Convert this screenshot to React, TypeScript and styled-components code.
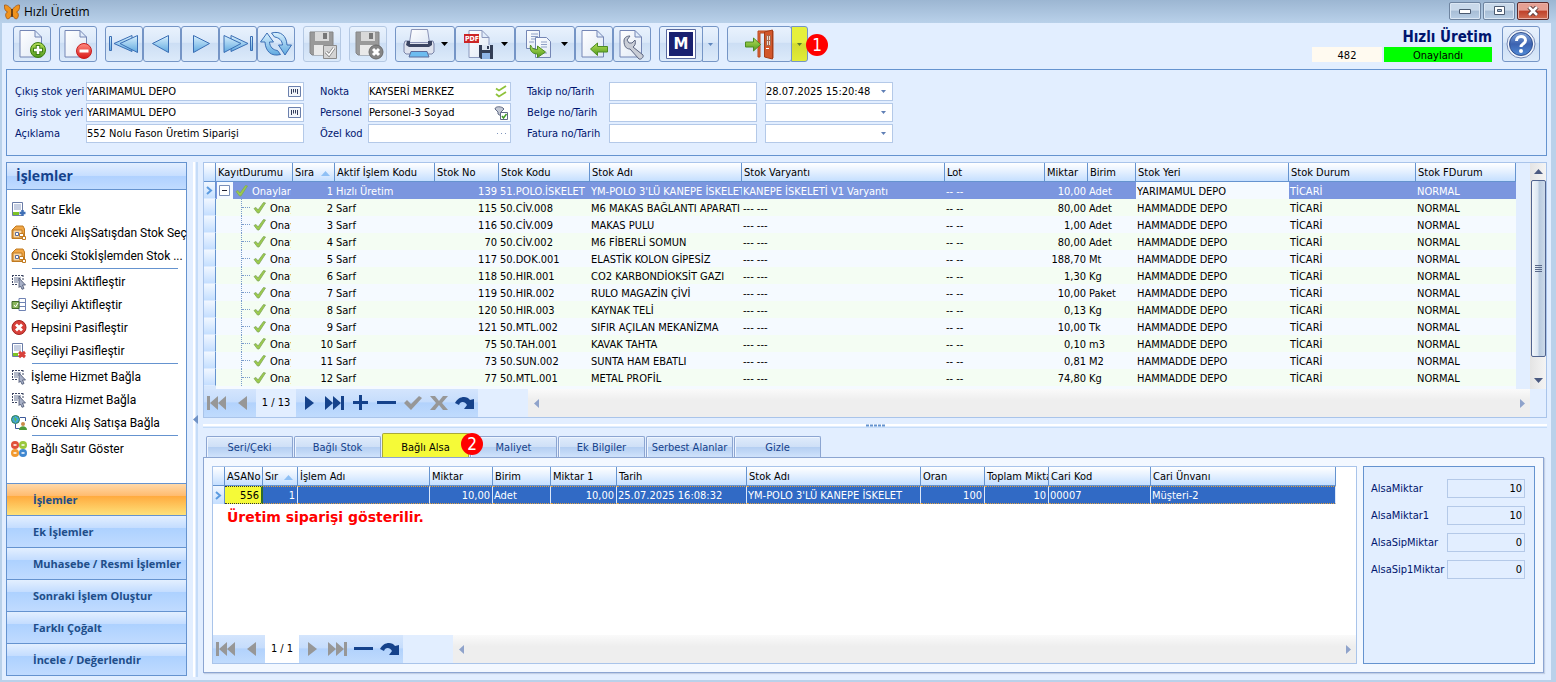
import React from "react";
import styled, { createGlobalStyle, css } from "styled-components";

const ui = `"DejaVu Sans Condensed", "DejaVu Sans", sans-serif`;
const segoe = `"Open Sans", "Noto Sans", sans-serif`;
const listFont = `Roboto, "Open Sans", sans-serif`;

const Global = createGlobalStyle`
  *, *::before, *::after { box-sizing: border-box; }
  body { margin: 0; background: #b9d1ea; font-family: ${ui}; font-size: 11px; color: #000; }
  button, input { font: inherit; color: inherit; margin: 0; padding: 0; border: 0; background: none; border-radius: 0; }
  svg { display: block; flex: none; }
`;

const Window = styled.div`
  min-height: 100vh;
  display: flex;
  flex-direction: column;
  border: solid #b9d1ea;
  border-width: 0 5px 2px 2px;
`;
const TitleBar = styled.header`
  height: 23px;
  margin: 0 -5px 0 -2px;
  padding: 0 7px 0 4px;
  display: flex;
  align-items: center;
  gap: 4px;
  background: linear-gradient(#9cb6d2, #b9d1ea);
  font: 12px/16px ${segoe};
`;
const WindowButtons = styled.div`
  margin-left: auto;
  display: flex;
  gap: 2px;
  align-self: flex-start;
  padding-top: 2px;
`;
const WindowButton = styled.button<{ $close?: boolean }>`
  width: 32px;
  height: 18px;
  display: grid;
  place-items: center;
  border: 1px solid ${(p) => (p.$close ? "#5b2b2b" : "#6e84a0")};
  border-radius: 2px;
  box-shadow: inset 0 0 0 1px ${(p) => (p.$close ? "#e9b0a6" : "#dbe7f4")};
  background: ${(p) =>
    p.$close
      ? "linear-gradient(#e6a093 45%, #bf4029 50%, #cf6b50)"
      : "linear-gradient(#c9d9ea 45%, #a7bdd5 50%, #b9cfe6)"};
`;

const Client = styled.main`
  flex: 1;
  display: flex;
  flex-direction: column;
  background: #e2eeff;
  padding: 3px 4px 3px 4px;
`;

const ToolBar = styled.div`
  display: flex;
  align-items: flex-start;
  padding: 0 7px;
  height: 43px;
`;
const ToolGroup = styled.div`
  display: flex;
  margin-right: 8px;
  position: relative;
`;
const toolFace = css`
  border: 1px solid #7595c6;
  border-radius: 3px;
  background: linear-gradient(#e9f2fd 0%, #dae8f9 45%, #ccdef4 48%, #dceafa 100%);
`;
const ToolButton = styled.button<{ $w?: number; $faded?: boolean }>`
  ${toolFace}
  width: ${(p) => p.$w ?? 38}px;
  height: 36px;
  display: flex;
  align-items: center;
  justify-content: center;
  gap: 6px;
  ${(p) => p.$faded && "border-color: #b4c8e3;"}
`;
const DropButton = styled(ToolButton)<{ $lit?: boolean }>`
  margin-left: -1px;
  border-radius: 0 3px 3px 0;
  ${(p) => p.$lit && "background: linear-gradient(#e6f03c 45%, #d3dc30 50%, #e2ec38);"}
`;
const Badge = styled.span`
  position: absolute;
  left: 79px;
  top: 8px;
  width: 22px;
  height: 22px;
  border-radius: 50%;
  background: #f00;
  color: #fff;
  display: grid;
  place-items: center;
  font: 17px/22px ${ui};
  z-index: 2;
`;
const StatusArea = styled.div`
  margin-left: auto;
  display: flex;
  gap: 10px;
`;
const StatusGrid = styled.div`
  display: grid;
  grid-template-columns: 70px 108px;
  column-gap: 2px;
  align-content: start;
  text-align: center;
  line-height: 13px;
  h1 {
    grid-column: 1 / 3;
    margin: 0;
    padding-top: 2px;
    text-align: right;
    color: #00156e;
    font: bold 15px/19px ${ui};
  }
`;
const DocNo = styled.span`
  background: #fffaf0;
  padding-top: 2px;
`;
const Approved = styled(DocNo)`
  background: #0f0;
`;

const FormPanel = styled.section`
  border: 1px solid #6593cf;
  height: 87px;
  padding: 12px 8px;
  display: flex;
  align-items: flex-start;
`;
const FormColumn = styled.div<{ $label: number; $field: number; $gap: number }>`
  display: grid;
  grid-template-columns: ${(p) => p.$label}px ${(p) => p.$field}px;
  row-gap: 2px;
  margin-right: ${(p) => p.$gap}px;
  color: #00156e;
  line-height: 19px;
  white-space: nowrap;
`;
const DateColumn = styled.div`
  display: grid;
  grid-template-columns: 128px;
  row-gap: 2px;
`;
const Field = styled.span`
  height: 19px;
  display: flex;
  align-items: center;
  background: #fff;
  border: 1px solid #b4c9e8;
  color: #000;
  padding: 0 2px 0 0;
  input { flex: 1; min-width: 0; height: 17px; }
  button { display: grid; place-items: center; min-width: 14px; height: 14px; }
`;

const Body = styled.div`
  flex: 1;
  display: flex;
  margin-top: 6px;
  min-width: 0;
`;
const Sidebar = styled.nav`
  width: 181px;
  flex: none;
  display: flex;
  flex-direction: column;
  border: 1px solid #6593cf;
  background: #fff;
  font: 12px/16px ${listFont};
  margin-bottom: 1px;
  h2 {
    margin: 0;
    height: 27px;
    padding-left: 9px;
    font: bold 14px/26px ${segoe};
    color: #15428b;
    border-bottom: 1px solid #6593cf;
    background: linear-gradient(#e3efff 0%, #c7deff 48%, #b0d1ff 52%, #c0dbff 100%);
  }
`;
const ActionList = styled.div`
  flex: 1;
  padding-top: 8px;
`;
const Action = styled.button`
  width: 100%;
  height: 23px;
  display: flex;
  align-items: center;
  gap: 4px;
  padding-left: 4px;
  text-align: left;
  white-space: nowrap;
`;
const Rule = styled.hr`
  margin: 1px 8px 1px 25px;
  border: 0;
  border-top: 1px solid #6593cf;
`;
const NavButton = styled.button<{ $on?: boolean }>`
  width: 100%;
  height: 32px;
  padding-left: 26px;
  text-align: left;
  white-space: nowrap;
  font: bold 11px/20px ${segoe};
  color: #204d89;
  border-top: 1px solid #6593cf;
  background: ${(p) =>
    p.$on
      ? "linear-gradient(#ffd9a9 0%, #ffbb6e 38%, #ffab3f 40%, #fee17a 100%)"
      : "linear-gradient(#e3efff 0%, #c4ddff 38%, #add1ff 40%, #c0dbff 100%)"};
`;
const VSplit = styled.div`
  width: 16px;
  flex: none;
  display: flex;
  align-items: center;
  &::after { content: ""; align-self: stretch; width: 5px; border-left: 2px solid #fff; border-right: 2px solid #c5dcf8; margin-left: -5px; }
  svg { margin-left: 6px; position: relative; z-index: 1; }
`;

const Content = styled.div`
  flex: 1;
  min-width: 0;
  display: flex;
  flex-direction: column;
`;
const GridPanel = styled.section`
  border: 1px solid #a9c4ea;
  background: #e2eeff;
`;
const GridTop = styled.div`
  display: flex;
  justify-content: space-between;
`;
const Clip = styled.div`
  flex: 1;
  min-width: 0;
  overflow: hidden;
`;
const Table = styled.table<{ $w: number }>`
  width: ${(p) => p.$w}px;
  table-layout: fixed;
  border-collapse: separate;
  border-spacing: 0;
  th, td { white-space: nowrap; overflow: hidden; font-weight: normal; text-align: left; }
  th {
    height: 19px;
    padding: 2px 1px 0 2px;
    line-height: 16px;
    border-right: 1px solid #6593cf;
    border-bottom: 1px solid #6593cf;
    background: linear-gradient(#fff 0%, #e6f1ff 45%, #c5dfff 100%);
  }
  td { height: 17px; line-height: 15px; padding: 2px 1px 0; }
  td:first-child { border-right: 1px solid #6593cf; border-bottom: 1px solid #dcebff; background: linear-gradient(#f1f7ff, #c5dfff); padding: 0 0 0 2px; }
  td.n { text-align: right; padding-right: 2px; }
  td.tree { padding: 0 1px; }
`;
const Row = styled.tr<{ $i: number; $sel?: boolean }>`
  background: ${(p) => (p.$sel ? "#7b96df" : p.$i % 2 ? "#f4fdf3" : "#f5faff")};
  color: ${(p) => (p.$sel ? "#fff" : "#000")};
  td.light { background: #f5faff; color: #000; }
`;
const TreeCell = styled.div`
  display: flex;
  align-items: center;
  height: 17px;
  line-height: 17px;
  margin-right: 1px;
  overflow: hidden;
  gap: 4px;
`;
const TreeText = styled.span`
  padding-top: 1px;
`;
const Indent = styled.span`
  flex: none;
  width: 8px;
  height: 17px;
  margin-left: 24px;
  border-left: 1px dotted #7a9ccb;
  &::after { content: ""; display: block; width: 8px; height: 9px; border-bottom: 1px dotted #7a9ccb; }
`;
const RootMark = styled.span`
  flex: none;
  width: 17px;
  height: 17px;
  background: #f5faff;
  display: grid;
  place-items: center;
  margin: 0 -2px 0 -1px;
`;
const Peek = styled.div<{ $w: number }>`
  height: 3px;
  width: ${(p) => p.$w}px;
  border-left: 12px solid #d6e7fd;
  background: #f5faff;
`;
const VScroll = styled.div`
  width: 16px;
  margin: 0;
  display: flex;
  flex-direction: column;
  align-items: center;
  background: linear-gradient(90deg, #e4e4e4, #f4f4f4);
`;
const ScrollArrow = styled.button`
  width: 16px;
  height: 17px;
  display: grid;
  place-items: center;
`;
const VThumb = styled.div`
  width: 15px;
  height: 177px;
  margin-bottom: auto;
  border: 1px solid #51648f;
  border-radius: 2px;
  background: linear-gradient(90deg, #f3f7fb 0%, #dbe6f1 45%, #b9cbdf 55%, #ccdaea 100%);
  display: grid;
  place-items: center;
`;
const NavBar = styled.div`
  height: 28px;
  display: flex;
`;
const NavStrip = styled.div`
  display: flex;
  background: linear-gradient(#d4e5fd 0%, #c6ddfc 45%, #b2d2fc 50%, #c0dbfd 100%);
`;
const NavItem = styled.button`
  width: 26px;
  height: 28px;
  padding-right: 2px;
  display: grid;
  place-items: center;
`;
const NavPos = styled.span<{ $w: number; $bg: string }>`
  width: ${(p) => p.$w}px;
  text-align: center;
  line-height: 28px;
  background: ${(p) => p.$bg};
`;
const HScroll = styled.div<{ $corner?: boolean }>`
  flex: 1;
  margin-left: 50px;
  margin-right: ${(p) => (p.$corner ? 16 : 0)}px;
  display: flex;
  justify-content: space-between;
  align-items: center;
  background: linear-gradient(#fafafa, #eee 40%);
`;
const HSplit = styled.div`
  height: 15px;
  display: grid;
  place-items: center;
  background: linear-gradient(#e2eeff 6px, #fff 6px, #fff 8px, #e2eeff 8px, #e2eeff 9px, #c5dcf8 9px, #c5dcf8 10px, #e2eeff 10px);
`;
const TabList = styled.div`
  display: flex;
  align-items: flex-end;
  gap: 1px;
  height: 24px;
  padding-left: 3px;
`;
const Tab = styled.button<{ $on?: boolean }>`
  position: relative;
  z-index: ${(p) => (p.$on ? 1 : 0)};
  width: 87px;
  height: ${(p) => (p.$on ? 24 : 21)}px;
  padding-top: ${(p) => (p.$on ? 4 : 2)}px;
  line-height: 18px;
  border: 1px solid #8ca5d1;
  border-bottom: 0;
  border-radius: 2px 2px 0 0;
  box-shadow: inset 1px 1px 0 #eef5ff;
  color: #15428b;
  background: linear-gradient(#dfebfb 0%, #cfe0f7 48%, #b5cff2 52%, #cfe2fb 100%);
  ${(p) =>
    p.$on &&
    css`
      color: #000;
      border-color: #a9a93a;
      box-shadow: none;
      background: #f5fa38;
    `}
`;
const TabBadge = styled(Badge)`
  left: 78px;
  top: -1px;
`;
const TabPage = styled.section`
  flex: 1;
  margin-right: 3px;
  margin-bottom: 4px;
  border: 1px solid #8ca5d1;
  box-shadow: 1px 1px 1px #c3d0e6;
  background: #f3f8ff;
  padding: 8px;
  display: flex;
  gap: 6px;
  min-width: 0;
`;
const LinkedPanel = styled(GridPanel)`
  flex: 1;
  min-width: 0;
  background: #fff;
  display: flex;
  flex-direction: column;
  ${Table} tr td { color: #fff; background: #316ac5; border-top: 1px dotted #e0a040; border-bottom: 1px dotted #e0a040; border-right: 1px solid #dbe7fa; line-height: 14px; padding: 2px 2px 0 1px; }
  ${Table} tr td:first-child { background: linear-gradient(#f1f7ff, #c5dfff); border: 0; border-right: 1px solid #6593cf; padding: 0 0 0 2px; }
  ${Table} tr td.mark { background: #f5fa38; color: #000; border-color: #333; border-right: 2px solid #2e6b2e; }
`;
const LinkedClip = styled.div`
  overflow: hidden;
`;
const Note = styled.p`
  flex: 1;
  margin: 0;
  padding: 3px 14px;
  color: #f00;
  font: bold 14px/20px "DejaVu Sans", sans-serif;
`;
const LowerNav = styled(NavBar)`
  background: #e2eeff;
`;
const Totals = styled.section`
  width: 172px;
  border: 1px solid #6593cf;
  background: #e2eeff;
  padding: 12px 7px;
  color: #00156e;
  display: grid;
  grid-template-columns: 76px 78px;
  grid-auto-rows: 19px;
  row-gap: 8px;
  align-content: start;
  line-height: 19px;
  white-space: nowrap;
  input { border: 1px solid #b4c9e8; text-align: right; padding: 0 2px; color: #000; width: 78px; height: 19px; }
`;
const HiddenSvg = styled.svg`
  position: absolute;
`;

/* ---------- drawings ---------- */

const Defs = () => (
  <HiddenSvg width="0" height="0" aria-hidden>
    <defs>
      <linearGradient id="blue" x1="0" y1="0" x2="0" y2="1">
        <stop offset="0" stopColor="#d9f0fd" /><stop offset="1" stopColor="#5fa9e0" />
      </linearGradient>
      <linearGradient id="paper" x1="0" y1="0" x2="1" y2="1">
        <stop offset="0" stopColor="#fff" /><stop offset="1" stopColor="#dfe8f5" />
      </linearGradient>
      <linearGradient id="green" x1="0" y1="0" x2="0" y2="1">
        <stop offset="0" stopColor="#b8e05a" /><stop offset="1" stopColor="#4f9a1c" />
      </linearGradient>
      <linearGradient id="red" x1="0" y1="0" x2="0" y2="1">
        <stop offset="0" stopColor="#ff8a80" /><stop offset="1" stopColor="#d81818" />
      </linearGradient>
      <linearGradient id="help" x1="0" y1="0" x2="0" y2="1">
        <stop offset="0" stopColor="#86a8dc" /><stop offset="0.5" stopColor="#3c62b0" /><stop offset="1" stopColor="#4f8ad6" />
      </linearGradient>
    </defs>
  </HiddenSvg>
);
const I = ({ w = 32, h = 32, children }: { w?: number; h?: number; children: React.ReactNode }) => (
  <svg width={w} height={h} viewBox={`0 0 ${w} ${h}`} aria-hidden>{children}</svg>
);
const Page = ({ x = 5 }: { x?: number }) => (
  <path d={`M${x} 2.500h15l6.500 6.500v20h-21.500z M${x + 15} 2.500v6.500h6.500`} fill="url(#paper)" stroke="#7486b5" strokeLinejoin="round" />
);
const NewIcon = () => (<I><Page x={4} /><circle cx="22" cy="22" r="7.500" fill="url(#green)" stroke="#3c7d12" /><path d="M22 17v10M17 22h10" stroke="#3c7d12" strokeWidth="4.500" /><path d="M22 18v8M18 22h8" stroke="#fff" strokeWidth="2.500" /></I>);
const DeleteIcon = () => (<I><Page x={3} /><circle cx="22" cy="23" r="7.500" fill="url(#red)" stroke="#c81e1e" /><path d="M17.500 23h9" stroke="#fff" strokeWidth="3" /></I>);
const tri = { fill: "url(#blue)", stroke: "#3a6eb4", strokeLinejoin: "round" as const };
const FirstIcon = () => (<I><g {...tri}><path d="M1.500 8.500h2v14h-2z" /><path d="M24 7.500v16L6 15.500z" /><path d="M29.500 7.500v17L12 15.500z" /></g></I>);
const PrevIcon = () => (<I><path d="M22.500 7.500v17L6.500 15.500z" {...tri} /></I>);
const NextIcon = () => (<I><path d="M9.500 7.500v17L25.500 15.500z" {...tri} /></I>);
const LastIcon = () => (<I><g {...tri}><path d="M28.500 8.500h2v14h-2z" /><path d="M9 7.500v16L26 15.500z" /><path d="M2 7.500v17L19 15.500z" /></g></I>);
const RefreshIcon = () => (
  <I><g {...tri}>
    <path d="M5 14H.5L7 5l6.500 9H9.500c.3 5 3.500 8 8 8.500l3 4C11 29 5.500 23 5 14z" />
    <path d="M27 17h4.500L25 27l-6.500-10H22.500c-.3-4.500-3.500-7.500-8-8l-3-4C21 2.500 26.500 8 27 17z" />
  </g></I>
);
const GreyDisk = ({ ok }: { ok?: boolean }) => (
  <I><path d="M4 4h23v23H6l-2-2z" fill="#9a9a9a" stroke="#858585" /><path d="M9 4h14v9H9z" fill="#d9d9d9" /><path d="M17 5h4v6h-4z" fill="#777" /><path d="M8 17h15v10H8z" fill="#e9e9e9" />
    {ok ? (<><path d="M17.500 17.500h13v13h-13z" fill="#d4d4d4" stroke="#8a8a8a" /><path d="M20 24l3 3 5-7" fill="none" stroke="#777" strokeWidth="3" /><path d="M20 24l3 3 5-7" fill="none" stroke="#fff" strokeWidth="1.500" /></>)
      : (<><circle cx="24" cy="24" r="7" fill="#858585" stroke="#6a6a6a" /><path d="M21 21l6 6M27 21l-6 6" stroke="#fff" strokeWidth="3" /></>)}
  </I>
);
const Down = ({ c = "#000", s = 7 }: { c?: string; s?: number }) => (<I w={s} h={s > 5 ? 4 : 3}><path d={s > 5 ? "M0 0h7L3.500 4z" : "M0 0h5L2.500 3z"} fill={c} /></I>);
const PrintIcon = () => (<I><path d="M2 13h28l1 3v8l-2 2H3l-2-2v-8z" fill="#dfe3ee" stroke="#7a84a8" /><path d="M8.500 1.500h16l2 13h-20z" fill="url(#paper)" stroke="#8b93b5" /><path d="M4 13h3v3h18v-3h4v4l-3 2H6l-3-2z" fill="#3a4461" /><path d="M8 23.500h16l2 5.500H6z" fill="#6cbcf0" stroke="#5b6c9c" /></I>);
const PdfIcon = () => (<I><path d="M6 2.500h13l7 7v20H6z M19 2.500v7h7" fill="url(#paper)" stroke="#8b98bd" /><path d="M1 6h15v9H1z" fill="#cc2525" /><text x="2" y="13" fontSize="7" fontWeight="bold" fill="#fff" fontFamily="DejaVu Sans Condensed">PDF</text><path d="M16 17h14v14H18l-2-2z" fill="#333e56" /><path d="M19 17h8v5h-8z" fill="#dde6f2" /><path d="M24 18h2v3h-2z" fill="#333e56" /><path d="M19 25h8v6h-8z" fill="#8fb5e6" /></I>);
const CopyIcon = () => (<I><path d="M3.500 2.500h13v18h-13z" fill="url(#paper)" stroke="#7486b5" /><path d="M8 6h7M8 8.500h7M8 11h5M6 14h5" stroke="#8fa0c6" /><path d="M12.500 9.500h11l4 4v16h-15z" fill="url(#paper)" stroke="#7486b5" /><path d="M18 14h6M18 16.500h6M18 19h6M16 25h8" stroke="#8fa0c6" /><path d="M7.500 17c1 3 3 4.500 7 4.500V18l8 6-8 5.500V26c-6 0-8-4-7-9z" fill="url(#green)" stroke="#4d8c22" strokeLinejoin="round" /></I>);
const ImportIcon = () => (<I><Page x={4} /><path d="M12.500 21l7-6v3.500h10v5.500h-10V27.500z" fill="url(#green)" stroke="#4d8c22" strokeLinejoin="round" /></I>);
const ToolsIcon = () => (<I><Page x={4} /><path d="M8 13c0-3 2-5 6-5l-3 4 2 3h3l3-3c1 3 0 6-2 7l10 8c1 2-2 5-4 4l-9-10c-4 0-6-3-6-8z" fill="#c9cdd6" stroke="#5c6580" strokeLinejoin="round" /></I>);
const DoorIcon = () => (<I><path d="M14 3h15v27h-2V5H16v24h-2z" fill="#e06a3c" stroke="#b9471f" /><path d="M20.500 4l8-2v29l-8-2z" fill="#d2562a" stroke="#a63d18" /><path d="M22.500 7.500h4v10h-4zM24.500 7v10M22 12.500h5" fill="#eadbd2" stroke="#a7674c" /><path d="M22 20.500h3" stroke="#fff" /><path d="M1.500 14h8v-4l7 6.500-7 6.500v-4h-8z" fill="url(#green)" stroke="#4d8c22" strokeLinejoin="round" /></I>);
const HelpIcon = () => (<I><circle cx="16" cy="16" r="14" fill="#f2f5fb" stroke="#7286b3" /><circle cx="16" cy="16" r="11.500" fill="url(#help)" stroke="#31508f" /><path d="M11.500 13c0-6 9-6 9-.5 0 3.500-4.500 3-4.500 6.500" fill="none" stroke="#fff" strokeWidth="3" /><circle cx="16" cy="23" r="2" fill="#fff" /></I>);
const Butterfly = () => (<I w={16} h={16}><path d="M8 6C6 3 3 .5.500 1c-.5 3 .5 6 3 7C1 9 1 13 3.500 15c2 0 4-3 4.500-5 .5 2 2.500 5 4.500 5 2.500-2 2.500-6 0-7 2.500-1 3.500-4 3-7C13 .5 10 3 8 6z" fill="#f0931c" stroke="#9c4a07" strokeWidth=".7" /><path d="M8 5v8" stroke="#4a2a10" strokeWidth="1.500" /></I>);
const Check = () => (<I w={13} h={13}><path d="M1 7.500l2-1 2 2.500L10.500 1.500l2 .5L6 12H4.500z" fill="#9ccb4c" stroke="#7fa65a" strokeWidth=".8" /></I>);
const Keys = () => (<I w={13} h={11}><path d="M.5.5h12v10H.5z" fill="#f3f6fb" stroke="#6b80ad" /><path d="M3.500 3v5M5.500 3v3.500M7.500 3v3.500M9.500 3v5" stroke="#333d5c" /></I>);
const DoubleCheck = () => (<I w={12} h={13}><path d="M1 3.500l3 2L11 1M1 9l3 2.500L11 7" fill="none" stroke="#8fc23a" strokeWidth="1.800" /></I>);
const PersonPick = () => (<I w={14} h={14}><path d="M1 3c0-3 7-3 9 0l-3 3v4l-3-2V6z" fill="#c3c8d4" stroke="#606a85" /><path d="M6.500 6.500h7v7h-7z" fill="#fff" stroke="#606a85" /><path d="M8 10l1.500 2 3-4" fill="none" stroke="#3f9a22" strokeWidth="1.500" /></I>);
const Dots = () => (<I w={9} h={2}><path d="M0 0h1v1H0zM4 0h1v1H4zM8 0h1v1H8z" fill="#7f95bd" /></I>);
const Arrow = ({ l, c = "#8fa3cb" }: { l?: boolean; c?: string }) => (<I w={5} h={9}><path d={l ? "M5 0v9L0 4.500z" : "M0 0v9l5-4.500z"} fill={c} /></I>);
const Chevron = () => (<I w={7} h={9}><path d="M1 1l4 3.500L1 8" fill="none" stroke="#5b9be0" strokeWidth="2" /></I>);

const glyphs: Record<string, string> = {
  first: "M0 1h3v14H0z M3 8l8-7v14z M11 8l8-7v14z",
  prev: "M5 8l9-7v14z",
  next: "M6 1l9 7-9 7z",
  last: "M0 1l8 7-8 7z M8 1l8 7-8 7z M16 1h3v14h-3z",
  plus: "M8 0h3v6h6v3h-6v6H8V9H2V6h6z",
  minus: "M0 6h19v3H0z",
  check: "M1 8l3-3 4 4 8-8 3 2L8 15z",
  cross: "M1 1h5l4 5 4-5h5l-6 7 6 7h-5l-4-5-4 5H1l6-7z",
  redo: "M0 8c3-7 12-8 15-3l4-1v10H9l3-4c-2-4-7-4-8 0z",
};
const NavGlyph = ({ k, on }: { k: string; on?: boolean }) => (
  <NavItem aria-label={k}><I w={19} h={16}><path d={glyphs[k]} fill={on ? "#15428b" : "#979797"} /></I></NavItem>
);

const sideIcons: Record<string, React.ReactNode> = {
  add: <><path d="M1.500.5h10v13h-10z" fill="#fff" stroke="#6b7da8" /><path d="M3 3h7M3 5h7M3 7h7" stroke="#8fa0c6" /><path d="M2 10h6v3H2z" fill="#7dc325" /><path d="M11.500 8v6M8.500 11h6" stroke="#3f6fb5" strokeWidth="2.500" /></>,
  box: <><path d="M1 5l4-4h7l1.500 3v9.500H1z" fill="#f0a646" stroke="#c17a20" /><path d="M2 5h9v8H2z" fill="#f9d7a4" stroke="#c17a20" /><path d="M4.500 7.500h3v3h-3z" fill="#fff" stroke="#5b6c9c" /><path d="M8.500 8.500h4v3h-4zM11.500 11.500h3v3h-3z" fill="#fff" stroke="#c17a20" /></>,
  pick: <><path d="M1 1.500h11M1.500 1v10M12 1v6M1 10.500h6" stroke="#3d4663" strokeDasharray="2 1" fill="none" /><path d="M3 4h7M3 6h5M3 8h4" stroke="#6b7694" /><path d="M8 4l6.500 7h-3l1.500 3.500-2 .8L9.500 12 8 13.500z" fill="#a7b0c6" stroke="#46506e" strokeWidth=".8" /></>,
  table: <><path d="M8 1.500h6.500v12H8zM8 5.500h6.500M8 9.500h6.500" fill="#fff" stroke="#7083b4" /><path d="M1 4.500h7v7H1z" fill="#8ab65c" stroke="#3f6b2a" /><path d="M3 8l1.500 2L7 6" stroke="#fff" fill="none" /></>,
  stop: <><circle cx="8" cy="7.500" r="7" fill="#d8403a" stroke="#a32420" /><path d="M5 4.500l6 6M11 4.500l-6 6" stroke="#fff" strokeWidth="2.800" /></>,
  del: <><path d="M1.500.5h10v13h-10z" fill="#fff" stroke="#6b7da8" /><path d="M3 3h7M3 5h7M3 7h7" stroke="#8fa0c6" /><path d="M2 10h5v3H2z" fill="#7dc325" /><path d="M8 9l6 5M14 9l-6 5" stroke="#d8403a" strokeWidth="3" /></>,
  globe: <><circle cx="4.500" cy="4.500" r="4" fill="#43a5d8" stroke="#2a7a4a" /><path d="M3 2l3 2-2 3z" fill="#5cc04a" /><path d="M9 2.500h5.500V6M4.500 9v4.500H9" fill="none" stroke="#3d5a9a" /><circle cx="12" cy="9" r="2" fill="#c98b4a" /><path d="M8 15c0-5 8-5 8 0z" fill="#4d9a3a" /></>,
  balls: <><circle cx="4" cy="4" r="4" fill="#e0503a" /><circle cx="12" cy="4" r="4" fill="#9ac83c" /><circle cx="4" cy="12" r="4" fill="#f29a30" /><circle cx="12" cy="12" r="4" fill="#3f87d0" /><path d="M2.500 4h3M10.500 4h3M2.500 12h3M10.500 12h3" stroke="#fff" strokeWidth="1.500" /></>,
};
const SideIcon = ({ k }: { k: string }) => <I w={16} h={16}>{sideIcons[k]}</I>;

/* ---------- data ---------- */

const actions: (string[] | null)[] = [
  ["add", "Satır Ekle"], ["box", "Önceki AlışSatışdan Stok Seç"], ["box", "Önceki Stokİşlemden Stok ..."], null,
  ["pick", "Hepsini Aktifleştir"], ["table", "Seçiliyi Aktifleştir"], ["stop", "Hepsini Pasifleştir"], ["del", "Seçiliyi Pasifleştir"], null,
  ["pick", "İşleme Hizmet Bağla"], ["pick", "Satıra Hizmet Bağla"], ["globe", "Önceki Alış Satışa Bağla"], null,
  ["balls", "Bağlı Satır Göster"],
];
const sections = ["İşlemler", "Ek İşlemler", "Muhasebe / Resmi İşlemler", "Sonraki İşlem Oluştur", "Farklı Çoğalt", "İncele / Değerlendir"];

const cols: [string, number][] = [
  ["", 12], ["KayıtDurumu", 77], ["Sıra", 42], ["Aktif İşlem Kodu", 100], ["Stok No", 64], ["Stok Kodu", 91], ["Stok Adı", 152],
  ["Stok Varyantı", 203], ["Lot", 100], ["Miktar", 43], ["Birim", 48], ["Stok Yeri", 153], ["Stok Durum", 127], ["Stok FDurum", 100],
];
const rows: string[][] = [
  ["139", "51.POLO.İSKELET", "YM-POLO 3'LÜ KANEPE İSKELET", "10,00", "Adet"],
  ["115", "50.CİV.008", "M6 MAKAS BAĞLANTI APARATI", "80,00", "Adet"],
  ["116", "50.CİV.009", "MAKAS PULU", "1,00", "Adet"],
  ["70", "50.CİV.002", "M6 FİBERLİ SOMUN", "80,00", "Adet"],
  ["117", "50.DOK.001", "ELASTİK KOLON GİPESİZ", "188,70", "Mt"],
  ["118", "50.HIR.001", "CO2 KARBONDİOKSİT GAZI", "1,30", "Kg"],
  ["119", "50.HIR.002", "RULO MAGAZİN ÇİVİ", "10,00", "Paket"],
  ["120", "50.HIR.003", "KAYNAK TELİ", "0,13", "Kg"],
  ["121", "50.MTL.002", "SIFIR AÇILAN MEKANİZMA", "10,00", "Tk"],
  ["75", "50.TAH.001", "KAVAK TAHTA", "0,10", "m3"],
  ["73", "50.SUN.002", "SUNTA HAM EBATLI", "0,81", "M2"],
  ["77", "50.MTL.001", "METAL PROFİL", "74,80", "Kg"],
];
const linkedCols: [string, number][] = [
  ["", 12], ["ASANo", 38], ["Sır", 35], ["İşlem Adı", 132], ["Miktar", 63], ["Birim", 58], ["Miktar 1", 66], ["Tarih", 130],
  ["Stok Adı", 174], ["Oran", 64], ["Toplam Mikta", 64], ["Cari Kod", 102], ["Cari Ünvanı", 185],
];
const linkedRow = ["556", "1", "", "10,00", "Adet", "10,00", "25.07.2025 16:08:32", "YM-POLO 3'LÜ KANEPE İSKELET", "100", "10", "00007", "Müşteri-2"];
const rightAligned = [0, 1, 3, 5, 8, 9];
const tabs = ["Seri/Çeki", "Bağlı Stok", "Bağlı Alsa", "Maliyet", "Ek Bilgiler", "Serbest Alanlar", "Gizle"];
const totals: [string, string][] = [["AlsaMiktar", "10"], ["AlsaMiktar1", "10"], ["AlsaSipMiktar", "0"], ["AlsaSip1Miktar", "0"]];

const sum = (c: [string, number][]) => c.reduce((a, [, w]) => a + w, 0);

const SortHead = styled.span`
  display: flex;
  align-items: center;
  justify-content: space-between;
  padding-right: 3px;
`;
const Col = styled.col<{ $w: number }>`
  width: ${(p) => p.$w}px;
`;
const Head = ({ c }: { c: [string, number][] }) => (
  <>
    <colgroup>{c.map(([n, w]) => <Col key={n} $w={w} />)}</colgroup>
    <thead>
      <tr>
        {c.map(([n], i) => (
          <th key={n}>
            {i === 2 ? <SortHead>{n}<I w={9} h={5}><path d="M0 5h9L4.500 0z" fill="#8fc0f5" /></I></SortHead> : n}
          </th>
        ))}
      </tr>
    </thead>
  </>
);

const FormField = ({ id, label, value = "", children }: { id: string; label: string; value?: string; children?: React.ReactNode }) => (
  <>
    <label htmlFor={id}>{label}</label>
    <Field><input id={id} defaultValue={value} />{children && <button aria-label={`${label} seç`}>{children}</button>}</Field>
  </>
);

export default function App() {
  return (
    <Window>
      <Global />
      <Defs />
      <TitleBar>
        <Butterfly />
        Hızlı Üretim
        <WindowButtons>
          <WindowButton aria-label="Küçült"><I w={12} h={6}><path d="M.5 1.500h11v4H.5z" fill="#fff" stroke="#4b5a70" /></I></WindowButton>
          <WindowButton aria-label="Büyüt"><I w={11} h={10}><path d="M.5.5h10v8H.5z" fill="#fff" stroke="#4b5a70" /><path d="M3.500 3.500h4v2h-4z" fill="#a9bfd8" stroke="#4b5a70" /></I></WindowButton>
          <WindowButton $close aria-label="Kapat"><I w={12} h={10}><path d="M2 1l8 8M10 1L2 9" stroke="#5a3a3a" strokeWidth="4.500" /><path d="M2 1l8 8M10 1L2 9" stroke="#fff" strokeWidth="2.500" /></I></WindowButton>
        </WindowButtons>
      </TitleBar>
      <Client>
        <ToolBar>
          <ToolGroup><ToolButton aria-label="Yeni"><NewIcon /></ToolButton></ToolGroup>
          <ToolGroup><ToolButton aria-label="Sil"><DeleteIcon /></ToolButton></ToolGroup>
          <ToolGroup>
            <ToolButton aria-label="İlk"><FirstIcon /></ToolButton>
            <ToolButton aria-label="Önceki"><PrevIcon /></ToolButton>
            <ToolButton aria-label="Sonraki"><NextIcon /></ToolButton>
            <ToolButton aria-label="Son"><LastIcon /></ToolButton>
            <ToolButton aria-label="Yenile"><RefreshIcon /></ToolButton>
          </ToolGroup>
          <ToolGroup><ToolButton $faded aria-label="Kaydet"><GreyDisk ok /></ToolButton></ToolGroup>
          <ToolGroup><ToolButton $faded aria-label="Vazgeç"><GreyDisk /></ToolButton></ToolGroup>
          <ToolGroup>
            <ToolButton $w={60} aria-label="Yazdır"><PrintIcon /><Down /></ToolButton>
            <ToolButton $w={60} aria-label="PDF"><PdfIcon /><Down /></ToolButton>
            <ToolButton $w={60} aria-label="Kopyala"><CopyIcon /><Down /></ToolButton>
            <ToolButton aria-label="Aktar"><ImportIcon /></ToolButton>
            <ToolButton aria-label="Araçlar"><ToolsIcon /></ToolButton>
          </ToolGroup>
          <ToolGroup>
            <ToolButton $w={44} aria-label="Modül">
              <I w={30} h={30}><path d="M.5.5h29v29H.5z" fill="#fff" stroke="#5a6aa0" /><path d="M3 3h24v24H3z" fill="#1a2170" /><text x="15" y="20" textAnchor="middle" fontSize="15" fontWeight="bold" fill="#fff" fontFamily="DejaVu Sans">M</text></I>
            </ToolButton>
            <DropButton $w={17} aria-label="Modül listesi"><Down c="#5f86bd" s={5} /></DropButton>
          </ToolGroup>
          <ToolGroup>
            <ToolButton $w={65} aria-label="Çıkış"><DoorIcon /></ToolButton>
            <DropButton $w={17} $lit aria-label="Çıkış seçenekleri"><Down c="#5f7a2a" s={5} /></DropButton>
            <Badge>1</Badge>
          </ToolGroup>
          <StatusArea>
            <StatusGrid><h1>Hızlı Üretim</h1><DocNo>482</DocNo><Approved>Onaylandı</Approved></StatusGrid>
            <ToolButton aria-label="Yardım"><HelpIcon /></ToolButton>
          </StatusArea>
        </ToolBar>

        <FormPanel>
          <FormColumn $label={71} $field={218} $gap={16}>
            <FormField id="cikis" label="Çıkış stok yeri" value="YARIMAMUL DEPO"><Keys /></FormField>
            <FormField id="giris" label="Giriş stok yeri" value="YARIMAMUL DEPO"><Keys /></FormField>
            <FormField id="aciklama" label="Açıklama" value="552 Nolu Fason Üretim Siparişi" />
          </FormColumn>
          <FormColumn $label={48} $field={143} $gap={16}>
            <FormField id="nokta" label="Nokta" value="KAYSERİ MERKEZ"><DoubleCheck /></FormField>
            <FormField id="personel" label="Personel" value="Personel-3 Soyad"><PersonPick /></FormField>
            <FormField id="ozel" label="Özel kod"><Dots /></FormField>
          </FormColumn>
          <FormColumn $label={82} $field={148} $gap={8}>
            <FormField id="takip" label="Takip no/Tarih" />
            <FormField id="belge" label="Belge no/Tarih" />
            <FormField id="fatura" label="Fatura no/Tarih" />
          </FormColumn>
          <DateColumn>
            {["28.07.2025 15:20:48", "", ""].map((v, i) => (
              <Field key={i}>
                <input aria-label={`Tarih ${i + 1}`} defaultValue={v} />
                <button aria-label="Takvim"><Down c="#5f7fb5" s={5} /></button>
              </Field>
            ))}
          </DateColumn>
        </FormPanel>

        <Body>
          <Sidebar>
            <h2>İşlemler</h2>
            <ActionList>
              {actions.map((a, i) => (a ? <Action key={i}><SideIcon k={a[0]} />{a[1]}</Action> : <Rule key={i} />))}
            </ActionList>
            {sections.map((s, i) => <NavButton key={s} $on={i === 0}>{s}</NavButton>)}
          </Sidebar>
          <VSplit><Arrow l c="#6f92c6" /></VSplit>

          <Content>
            <GridPanel>
              <GridTop>
                <Clip>
                  <Table $w={sum(cols)}>
                    <Head c={cols} />
                    <tbody>
                      {rows.map((r, i) => (
                        <Row key={r[0]} $i={i} $sel={i === 0}>
                          <td>{i === 0 && <Chevron />}</td>
                          <td className="tree">
                            <TreeCell>
                              {i === 0 ? (
                                <RootMark><I w={11} h={11}><path d="M.5.5h10v10H.5z" fill="#fff" stroke="#7a8fb8" /><path d="M3 5.500h5" stroke="#223" /></I></RootMark>
                              ) : <Indent />}
                              <Check /><TreeText>Onaylandı</TreeText>
                            </TreeCell>
                          </td>
                          <td className="n">{i + 1}</td>
                          <td>{i === 0 ? "Hızlı Üretim" : "Sarf"}</td>
                          <td className="n">{r[0]}</td>
                          <td>{r[1]}</td>
                          <td>{r[2]}</td>
                          <td>{i === 0 ? "KANEPE İSKELETİ V1 Varyantı" : "--- ---"}</td>
                          <td>-- --</td>
                          <td className="n">{r[3]}</td>
                          <td>{r[4]}</td>
                          <td className={i === 0 ? "light" : ""}>{i === 0 ? "YARIMAMUL DEPO" : "HAMMADDE DEPO"}</td>
                          <td>TİCARİ</td>
                          <td>NORMAL</td>
                        </Row>
                      ))}
                    </tbody>
                  </Table>
                  <Peek $w={sum(cols)} />
                </Clip>
                <VScroll>
                  <ScrollArrow aria-label="Yukarı"><I w={9} h={5}><path d="M0 5h9L4.500 0z" fill="#4b5a80" /></I></ScrollArrow>
                  <VThumb><I w={7} h={7}><path d="M0 .5h7M0 2.500h7M0 4.500h7M0 6.500h7" stroke="#5b6a8a" /></I></VThumb>
                  <ScrollArrow aria-label="Aşağı"><I w={9} h={5}><path d="M0 0h9L4.500 5z" fill="#4b5a80" /></I></ScrollArrow>
                </VScroll>
              </GridTop>
              <NavBar>
                <NavStrip>
                  <NavGlyph k="first" /><NavGlyph k="prev" />
                  <NavPos $w={40} $bg="#e2eeff">1 / 13</NavPos>
                  <NavGlyph k="next" on /><NavGlyph k="last" on /><NavGlyph k="plus" on /><NavGlyph k="minus" on />
                  <NavGlyph k="check" /><NavGlyph k="cross" /><NavGlyph k="redo" on />
                </NavStrip>
                <HScroll $corner>
                  <ScrollArrow aria-label="Sola"><Arrow l /></ScrollArrow><ScrollArrow aria-label="Sağa"><Arrow /></ScrollArrow>
                </HScroll>
              </NavBar>
            </GridPanel>
            <HSplit><I w={19} h={3}><path d="M0 1.500h19" stroke="#6593cf" strokeWidth="2" strokeDasharray="3 1" /></I></HSplit>
            <TabList role="tablist">
              {tabs.map((t, i) => <Tab key={t} role="tab" $on={i === 2}>{t}{i === 2 && <TabBadge>2</TabBadge>}</Tab>)}
            </TabList>
            <TabPage>
              <LinkedPanel>
                <LinkedClip>
                  <Table $w={sum(linkedCols)}>
                    <Head c={linkedCols} />
                    <tbody>
                      <tr>
                        <td><Chevron /></td>
                        {linkedRow.map((v, i) => <td key={i} className={`${rightAligned.includes(i) ? "n" : ""} ${i === 0 ? "mark" : ""}`}>{v}</td>)}
                      </tr>
                    </tbody>
                  </Table>
                </LinkedClip>
                <Note>Üretim siparişi gösterilir.</Note>
                <LowerNav>
                  <NavStrip>
                    <NavGlyph k="first" /><NavGlyph k="prev" />
                    <NavPos $w={34} $bg="#fff">1 / 1</NavPos>
                    <NavGlyph k="next" /><NavGlyph k="last" /><NavGlyph k="minus" on /><NavGlyph k="redo" on />
                  </NavStrip>
                  <HScroll>
                    <ScrollArrow aria-label="Sola"><Arrow l /></ScrollArrow><ScrollArrow aria-label="Sağa"><Arrow /></ScrollArrow>
                  </HScroll>
                </LowerNav>
              </LinkedPanel>
              <Totals>
                {totals.map(([l, v]) => (
                  <React.Fragment key={l}><label htmlFor={l}>{l}</label><input id={l} defaultValue={v} /></React.Fragment>
                ))}
              </Totals>
            </TabPage>
          </Content>
        </Body>
      </Client>
    </Window>
  );
}
